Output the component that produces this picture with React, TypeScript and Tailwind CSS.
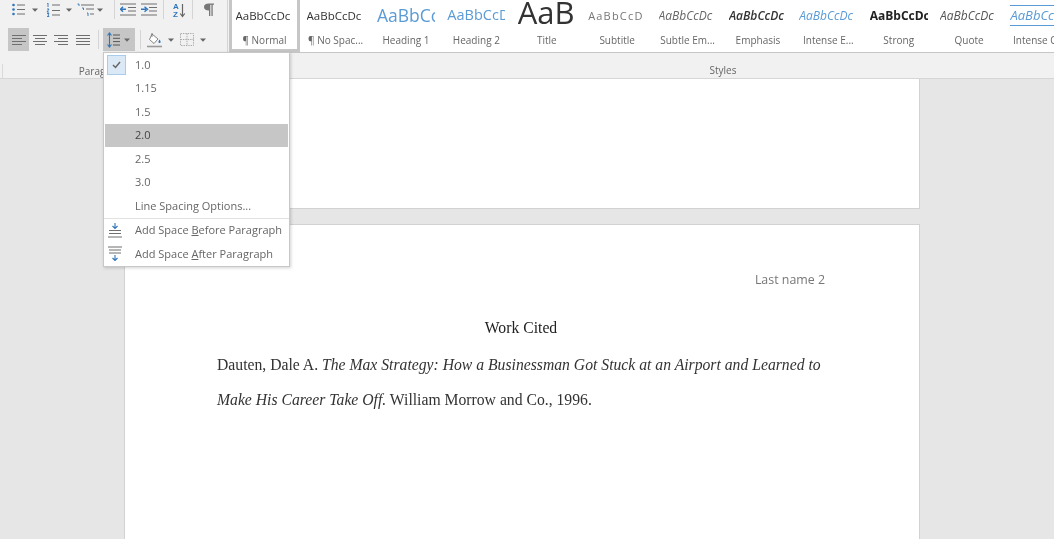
// Word ribbon with the line spacing menu open, over a document page
import React from 'react';

const GRAY = '#6f6f6f';
const BLUE = '#2f75bb';

// small dropdown triangle used next to the ribbon icons
const Arrow = ({ className = '' }: { className?: string }) => (
    <svg width="6" height="4" viewBox="0 0 6 4" className={className}>
        <path d="M0 0.5H6L3 3.7Z" fill="#666" />
    </svg>
);

const Divider = ({ className = '' }: { className?: string }) => (
    <div className={`w-px h-[19px] bg-[#d4d4d4] ${className}`} />
);

const Bullets = ({ className = '' }: { className?: string }) => (
    <svg width="13" height="13" viewBox="0 0 13 13" className={className}>
        <circle cx="1.5" cy="2" r="1.3" fill={BLUE} />
        <circle cx="1.5" cy="6.5" r="1.3" fill={BLUE} />
        <circle cx="1.5" cy="11" r="1.3" fill={BLUE} />
        <path d="M5 2H13M5 6.5H13M5 11H13" stroke={GRAY} strokeWidth="1" />
    </svg>
);

const Numbering = ({ className = '' }: { className?: string }) => (
    <svg width="14" height="14" viewBox="0 0 14 14" className={className}>
        <path d="M1 0.5L2 0V4M1 6H3L1 9H3M1 10.5H3L2 12L3 13.5H1" stroke={BLUE} strokeWidth="0.9" fill="none" />
        <path d="M6 2H14M6 7.5H14M6 12H14" stroke={GRAY} strokeWidth="1" />
    </svg>
);

const Multilevel = ({ className = '' }: { className?: string }) => (
    <svg width="17" height="14" viewBox="0 0 17 14" className={className}>
        <path d="M0.5 1H2V3M5 5H6.5V7M10 10H11V13" stroke={BLUE} strokeWidth="0.9" fill="none" />
        <path d="M4 2H17M9 6H17M13 11H17" stroke={GRAY} strokeWidth="1" />
    </svg>
);

const Indent = ({ flip = false, className = '' }: { flip?: boolean; className?: string }) => (
    <svg width="16" height="13" viewBox="0 0 16 13" className={className}>
        <path d="M0 1H16M8 4.5H16M8 8H16M0 12H16" stroke={GRAY} strokeWidth="1" />
        {flip ? (
            <path d="M0 6.3H5M3.5 3.8L6.5 6.3L3.5 8.8" stroke={BLUE} strokeWidth="1.4" fill="none" />
        ) : (
            <path d="M6 6.3H1M3 3.8L0.5 6.3L3 8.8" stroke={BLUE} strokeWidth="1.4" fill="none" />
        )}
    </svg>
);

const SortIcon = ({ className = '' }: { className?: string }) => (
    <svg width="13" height="16" viewBox="0 0 13 16" className={className}>
        <text x="0" y="7" fontSize="8" fontWeight="700" fill={BLUE} fontFamily="Liberation Sans, sans-serif">A</text>
        <text x="0" y="15" fontSize="8" fontWeight="700" fill={BLUE} fontFamily="Liberation Sans, sans-serif">Z</text>
        <path d="M9.5 2V14M7.2 11.5L9.5 14.5L11.8 11.5" stroke="#666" strokeWidth="1.2" fill="none" />
    </svg>
);

const Pilcrow = ({ className = '' }: { className?: string }) => (
    <svg width="10" height="13" viewBox="0 0 10 13" className={className}>
        <path d="M5 0.5H10V1.8H8.7V13H7.4V1.8H6.3V13H5V7.5C1.5 7.5 0 6 0 4C0 2 1.5 0.5 5 0.5Z" fill="#777" />
    </svg>
);

const LinesIcon = ({ d, className = '' }: { d: string; className?: string }) => (
    <svg width="14" height="12" viewBox="0 0 14 12" className={className}>
        <path d={d} stroke={GRAY} strokeWidth="1" />
    </svg>
);

const LineSpacingIcon = ({ className = '' }: { className?: string }) => (
    <svg width="13" height="16" viewBox="0 0 13 16" className={className}>
        <path d="M2.5 1V15M0.5 3.5L2.5 1L4.5 3.5M0.5 12.5L2.5 15L4.5 12.5" stroke={BLUE} strokeWidth="1.1" fill="none" />
        <path d="M6 3H13M6 6.3H13M6 9.6H13M6 13H13" stroke="#555" strokeWidth="1" />
    </svg>
);

const ShadingIcon = ({ className = '' }: { className?: string }) => (
    <svg width="16" height="16" viewBox="0 0 16 16" className={className}>
        <path d="M5 2L11 7L7 11.5L2.5 7.5Z" fill="#fff" stroke="#777" strokeWidth="0.9" />
        <path d="M5 1V5" stroke="#777" strokeWidth="0.9" />
        <path d="M12.5 7.5C14 9.5 14 11 12.5 11C11 11 11.2 9.5 12.5 7.5Z" fill={BLUE} />
        <path d="M0 14.5H15" stroke="#999" strokeWidth="1.6" />
    </svg>
);

const BordersIcon = ({ className = '' }: { className?: string }) => (
    <svg width="14" height="13" viewBox="0 0 14 13" className={className}>
        <path d="M0.5 0.5H13.5V12.5H0.5ZM7 0.5V12.5M0.5 6.5H13.5" fill="none" stroke="#aaa" strokeWidth="1" strokeDasharray="1.4 1" />
    </svg>
);

const SpaceBeforeIcon = () => (
    <svg width="14" height="15" viewBox="0 0 14 15">
        <path d="M7 0V5M4.5 3L7 5.5L9.5 3" stroke={BLUE} strokeWidth="1.1" fill="none" />
        <path d="M1 7.5H13M1 10.5H13M0 14H14" stroke={GRAY} strokeWidth="1" />
    </svg>
);

const SpaceAfterIcon = () => (
    <svg width="14" height="15" viewBox="0 0 14 15">
        <path d="M0 1H14M1 4H13M1 7H13" stroke={GRAY} strokeWidth="1" />
        <path d="M7 9V14.5M4.5 12L7 14.5L9.5 12" stroke={BLUE} strokeWidth="1.1" fill="none" />
    </svg>
);

const styleItems = [
    { label: '¶ Normal', sample: 'AaBbCcDc', cls: 'text-[11.5px] text-[#333]' },
    { label: '¶ No Spac...', sample: 'AaBbCcDc', cls: 'text-[11.5px] text-[#333]' },
    { label: 'Heading 1', sample: 'AaBbCc', cls: 'text-[17.5px] text-[#5b9bd5]' },
    { label: 'Heading 2', sample: 'AaBbCcD', cls: 'text-[14.5px] text-[#5b9bd5]' },
    { label: 'Title', sample: 'AaB', cls: 'text-[31px] text-[#333] -mt-[6px]' },
    { label: 'Subtitle', sample: 'AaBbCcD', cls: 'text-[11px] text-[#777] tracking-[1.2px]' },
    { label: 'Subtle Em...', sample: 'AaBbCcDc', cls: 'text-[12px] text-[#666] italic' },
    { label: 'Emphasis', sample: 'AaBbCcDc', cls: 'text-[12px] text-[#333] italic font-semibold' },
    { label: 'Intense E...', sample: 'AaBbCcDc', cls: 'text-[12px] text-[#5b9bd5] italic' },
    { label: 'Strong', sample: 'AaBbCcDc', cls: 'text-[12px] text-[#222] font-bold' },
    { label: 'Quote', sample: 'AaBbCcDc', cls: 'text-[12px] text-[#555] italic' },
    { label: 'Intense Q...', sample: 'AaBbCcDc', cls: 'text-[13px] text-[#5b9bd5] italic' },
];

const spacings = ['1.0', '1.15', '1.5', '2.0', '2.5', '3.0', 'Line Spacing Options...'];

const Ribbon = () => (
    <div className="flex h-[79px] bg-[#f1f1f1] border-b border-[#d6d6d6]">
        {/* paragraph group */}
        <div className="w-[228px] h-[74px] shrink-0 flex flex-col border-r border-[#d4d4d4]">
            <div className="h-[20px] mb-[9px] pl-[12px] flex items-center">
                <Bullets />
                <Arrow className="ml-[7px]" />
                <Numbering className="ml-[8px]" />
                <Arrow className="ml-[6px]" />
                <Multilevel className="ml-[5px]" />
                <Arrow className="ml-[3px]" />
                <Divider className="ml-[11px]" />
                <Indent className="ml-[5px]" />
                <Indent flip className="ml-[5px]" />
                <Divider className="ml-[6px]" />
                <SortIcon className="ml-[9px]" />
                <Divider className="ml-[6px]" />
                <Pilcrow className="ml-[11px]" />
            </div>
            <div className="h-[23px] pl-[8px] flex items-center">
                <div className="w-[21px] h-[23px] bg-[#c6c6c6] flex items-center justify-center">
                    <LinesIcon d="M0 1.5H14M0 4.5H10M0 7.5H14M0 10.5H10" />
                </div>
                <LinesIcon className="ml-[4px]" d="M0 1.5H14M2 4.5H12M0 7.5H14M2 10.5H12" />
                <LinesIcon className="ml-[7px]" d="M0 1.5H14M4 4.5H14M0 7.5H14M4 10.5H14" />
                <LinesIcon className="ml-[8px]" d="M0 1.5H14M0 4.5H14M0 7.5H14M0 10.5H14" />
                <Divider className="ml-[8px]" />
                <div className="ml-[4px] w-[32px] h-[23px] bg-[#c6c6c6] flex items-center pl-[4px]">
                    <LineSpacingIcon />
                    <Arrow className="ml-[4px]" />
                </div>
                <Divider className="ml-[5px]" />
                <ShadingIcon className="ml-[6px]" />
                <Arrow className="ml-[5px]" />
                <BordersIcon className="ml-[6px]" />
                <Arrow className="ml-[6px]" />
            </div>
            <div className="mt-[13px] ml-[2px] h-[18px] border-l border-[#d9d9d9] pr-[24px] flex items-center justify-center text-[10px] text-[#666]">
                Paragraph
            </div>
        </div>

        {/* styles gallery, runs on past the window edge */}
        <div className="w-[988px] shrink-0 ml-[1px] flex flex-col">
            <div className="h-[53px] bg-white border-b border-[#c6c6c6] flex">
                {styleItems.map((item, index) => (
                    <div
                        key={index}
                        className={`shrink-0 h-[52px] flex flex-col items-center ${index === 0 ? 'w-[71px] mr-[0.4px] border-[3px] border-t-0 border-[#c6c6c6]' : 'w-[70.4px]'}`}
                    >
                        <div className="h-[31px] w-[58px] overflow-hidden flex items-center justify-start">
                            <span className={`whitespace-nowrap leading-none ${item.cls} ${index === 11 ? 'border-y border-[#5b9bd5] py-[3px]' : ''}`}>
                                {item.sample}
                            </span>
                        </div>
                        <span className="text-[10px] leading-[14px] mt-[2px] text-[#666] whitespace-nowrap">
                            {item.label}
                        </span>
                    </div>
                ))}
            </div>
            <div className="h-[26px] pt-[10px] flex items-center justify-center text-[10px] text-[#666]">
                Styles
            </div>
        </div>
    </div>
);

const SpacingMenu = () => (
    <div className="absolute left-[103px] top-[52px] w-[187px] bg-white border border-[#c8c8c8] shadow-[1px_1px_3px_rgba(0,0,0,0.18)] text-[11px] text-[#666]">
        {spacings.map((value, index) => (
            <div
                key={value}
                className={`h-[23.5px] ml-px mr-px pl-[30px] flex items-center relative ${value === '2.0' ? 'bg-[#c6c6c6] text-[#444]' : ''}`}
            >
                {index === 0 && (
                    <div className="absolute left-[2px] top-[2px] w-[19px] h-[20px] bg-[#dbe9f7] border border-[#a8cbee] flex items-center justify-center">
                        <svg width="9" height="8" viewBox="0 0 9 8">
                            <path d="M1 4L3.5 6.5L8 1" stroke="#666" strokeWidth="1.5" fill="none" />
                        </svg>
                    </div>
                )}
                {value}
            </div>
        ))}
        <div className="border-t border-[#e2e2e2]">
            <div className="h-[23.5px] flex items-center pl-[4px]">
                <SpaceBeforeIcon />
                <span className="ml-[13px]">Add Space <u>B</u>efore Paragraph</span>
            </div>
            <div className="h-[23.5px] flex items-center pl-[4px]">
                <SpaceAfterIcon />
                <span className="ml-[13px]">Add Space <u>A</u>fter Paragraph</span>
            </div>
        </div>
    </div>
);

const App = () => (
    <div
        className="relative w-[1054px] h-[539px] overflow-hidden bg-[#e6e6e6] blur-[0.5px]"
        style={{ fontFamily: '"Open Sans", "Liberation Sans", sans-serif' }}
    >
        <Ribbon />

        <div className="ml-[124px] w-[796px]">
            {/* end of the previous page */}
            <div className="h-[130px] bg-white border-x border-b border-[#d2d2d2]" />

            <div className="mt-[15px] h-[320px] bg-white border-x border-t border-[#d2d2d2] pl-[92px] pr-[94px]">
                <div className="pt-[46px] text-right text-[12.4px] leading-[18px] text-[#777]">Last name 2</div>
                <div
                    className="text-[15.7px] text-[#333]"
                    style={{ fontFamily: '"Liberation Serif", serif' }}
                >
                    <div className="mt-[21px] text-center text-[#222] leading-[35px]">Work Cited</div>
                    <div className="mt-[2px] leading-[35px] whitespace-nowrap">
                        Dauten, Dale A. <i>The Max Strategy: How a Businessman Got Stuck at an Airport and Learned to</i>
                    </div>
                    <div className="leading-[35px] whitespace-nowrap">
                        <i>Make His Career Take Off.</i> William Morrow and Co., 1996.
                    </div>
                </div>
            </div>
        </div>

        <SpacingMenu />
    </div>
);

export default App;
